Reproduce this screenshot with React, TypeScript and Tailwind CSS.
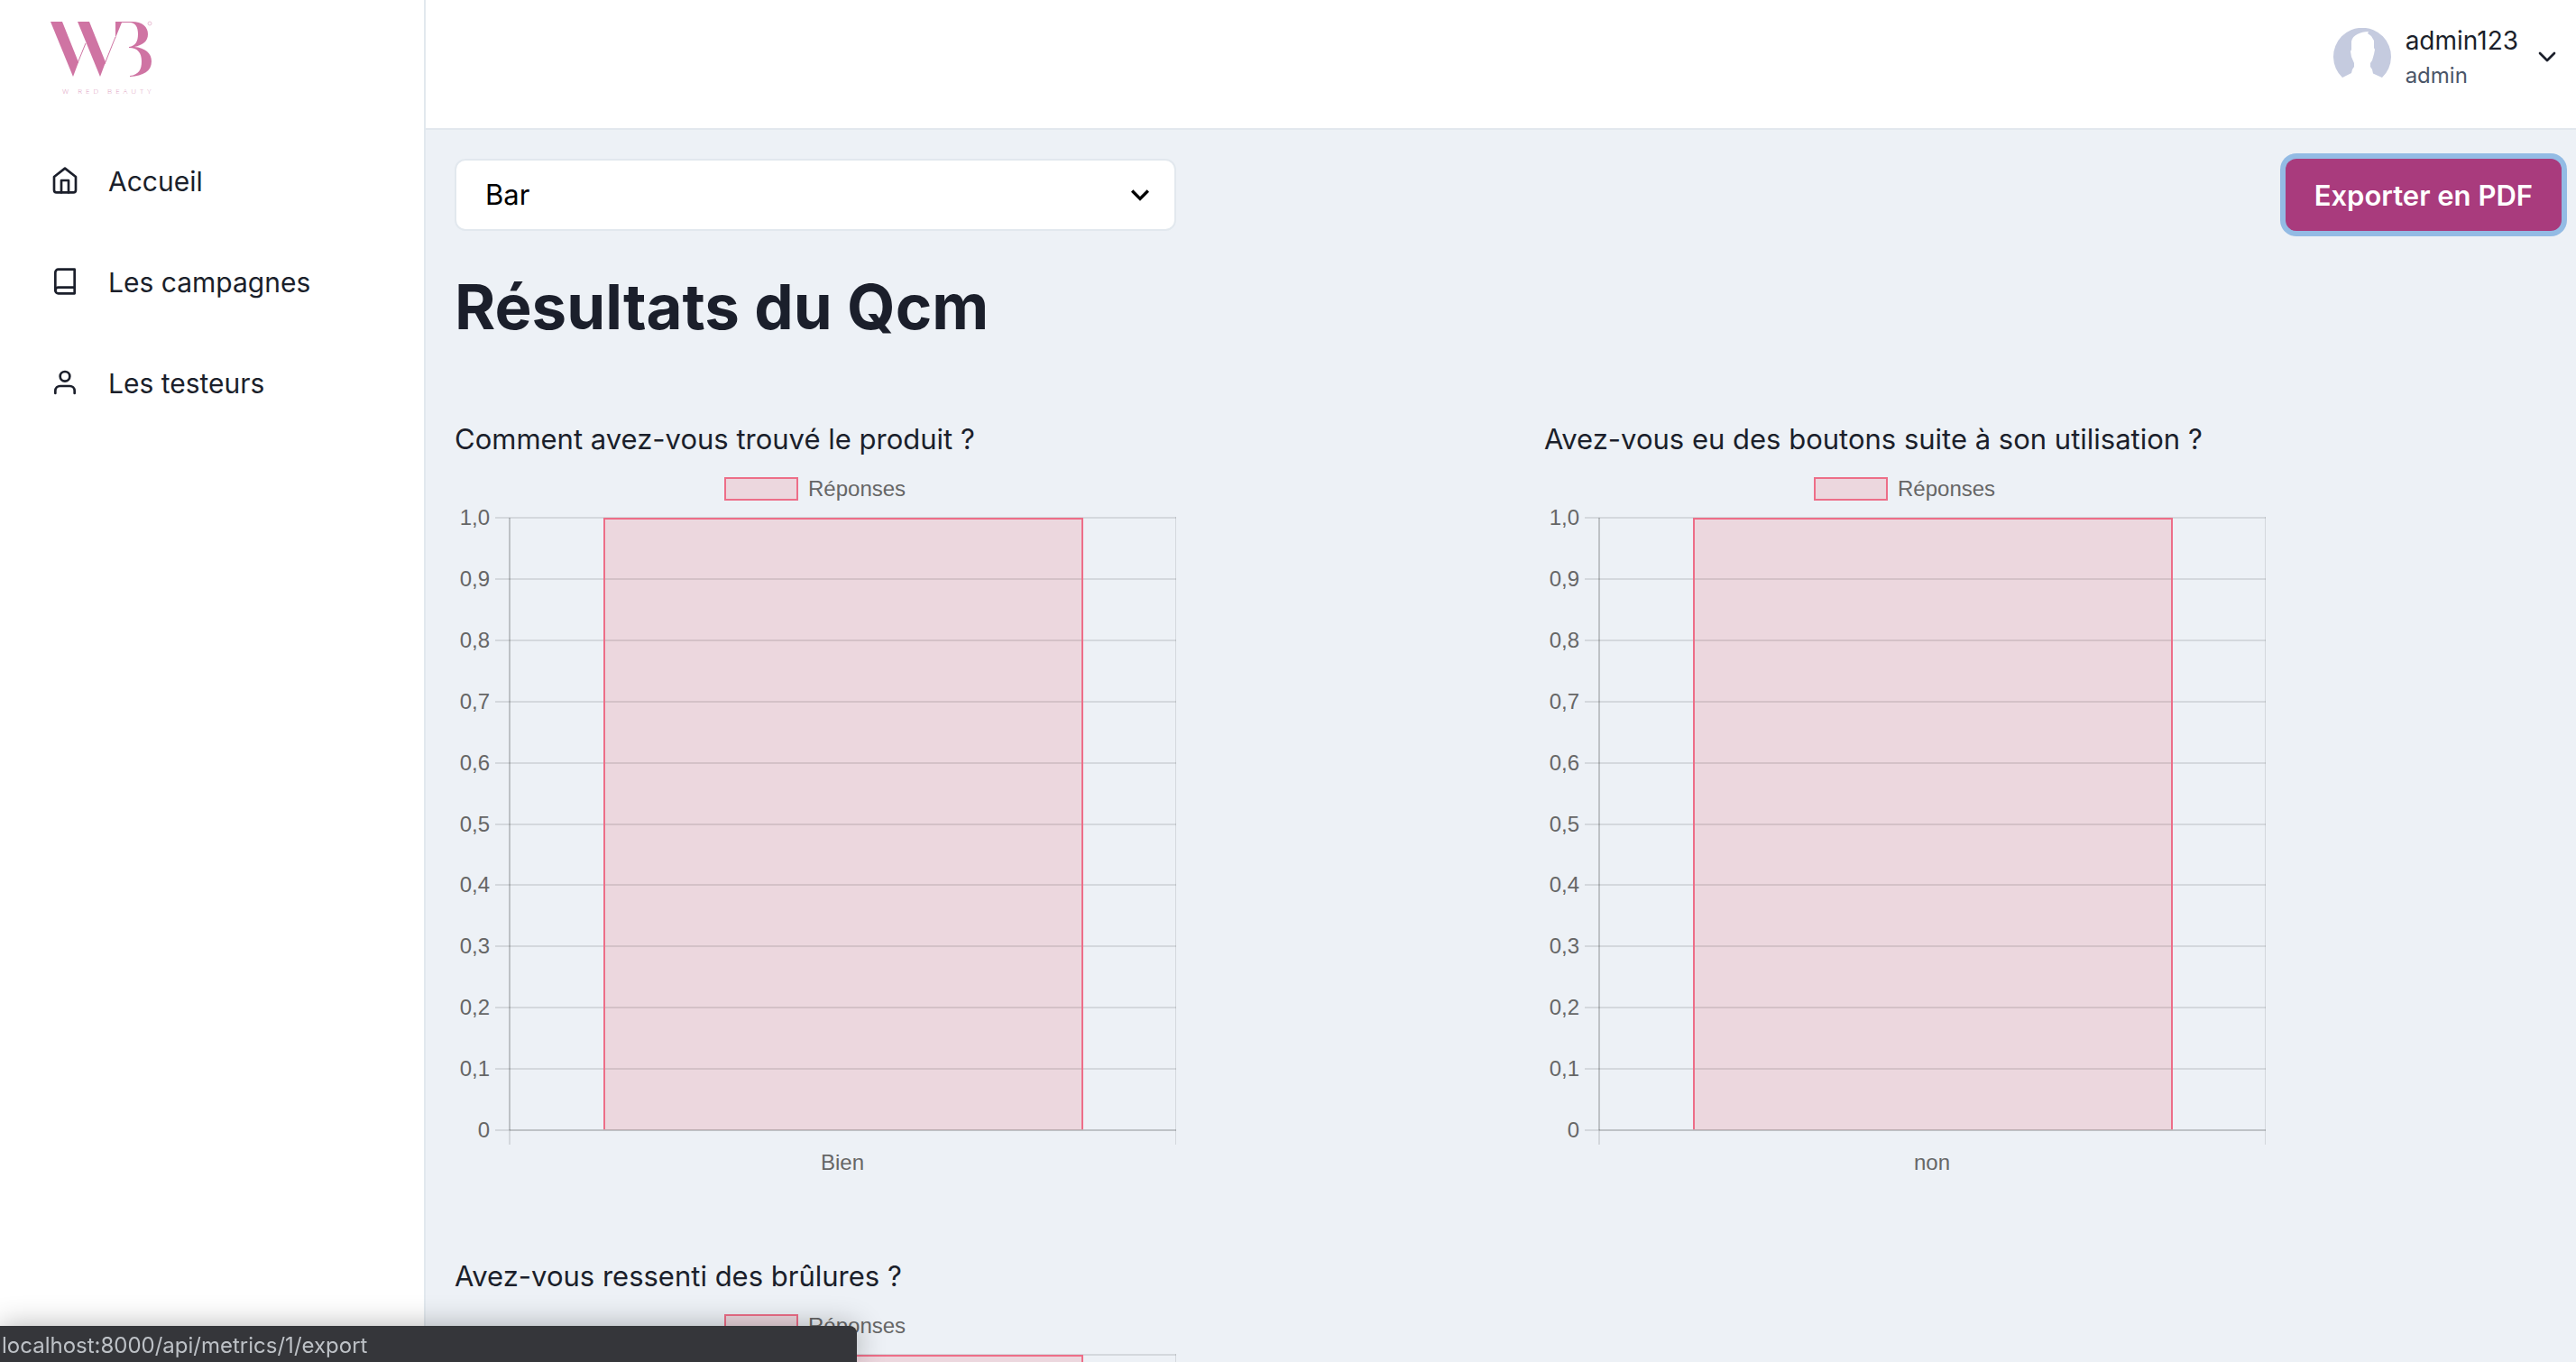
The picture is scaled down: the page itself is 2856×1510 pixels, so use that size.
import { FiBook, FiChevronDown, FiHome, FiUser } from "react-icons/fi";
import type { IconType } from "react-icons";

const NAV: { label: string; icon: IconType }[] = [
  { label: "Accueil", icon: FiHome },
  { label: "Les campagnes", icon: FiBook },
  { label: "Les testeurs", icon: FiUser },
];

const QUESTIONS = [
  { title: "Comment avez-vous trouvé le produit ?", answer: "Bien" },
  { title: "Avez-vous eu des boutons suite à son utilisation ?", answer: "non" },
  { title: "Avez-vous ressenti des brûlures ?", answer: "Oui" },
];

const TICKS = ["1,0", "0,9", "0,8", "0,7", "0,6", "0,5", "0,4", "0,3", "0,2", "0,1", "0"];

function Logo() {
  return (
    <svg viewBox="0 0 124 92" className="h-[92px] w-[124px]" role="img" aria-label="W Red Beauty">
      <g fill="#cf74a3">
        <path d="M4 8h13l18 45-6 16z" />
        <path d="M34 8h13l18 45-6 16z" />
        <path d="M76 8H94C106 8 112 14 112 22C112 30 106 34 97 36C109 37 116 43 116 52C116 63 107 68 92 69V68C102 67 105 61 105 52C105 43 101 37 91 37V36C98 35 101 30 101 22C101 14 98 9 92 9H83L76 26Z" />
      </g>
      <path d="M34 54l9-22M64 55l12-30" stroke="#cf74a3" strokeWidth="1" fill="none" />
      <circle cx="114" cy="10" r="2" stroke="#e9bfd5" fill="none" />
      <text x="17" y="88" fontSize="8" letterSpacing="4" fill="#dc9abd" fontWeight="300" fontFamily="'Open Sans', sans-serif">
        W RED BEAUTY
      </text>
    </svg>
  );
}

function Avatar() {
  return (
    <svg viewBox="0 0 64 64" className="size-16" aria-hidden="true">
      <path
        fill="#c5cbdf"
        d="M10 55A32 32 0 1 1 54 55L44 50.500 43 46 41 43V39L43 36 45 29 46 24 45 22V14L42 9 38 6 39 4C30 4 21 8 20 15V24L19 26 20 32 23 39V43L21 46 20 50Z"
      />
    </svg>
  );
}

function BarChart({ answer }: { answer: string }) {
  return (
    <svg viewBox="0 0 800 800" className="block w-full max-w-[800px]" role="img" aria-label={`Réponses : ${answer}`}>
      <rect x="300" y="19" width="80" height="24" fill="#ecd7de" stroke="#ed6e88" strokeWidth="2" />
      <g fill="#666" fontSize="24" fontFamily="'Liberation Sans', sans-serif">
        <text x="392" y="39">Réponses</text>
        {TICKS.map((t, i) => (
          <text key={t} x="39" y={Math.round(71 + i * 67.9)} textAnchor="end">
            {t}
          </text>
        ))}
        <text x="430" y="786" textAnchor="middle">{answer}</text>
      </g>
      <rect x="165" y="63" width="532" height="679" fill="#ecd7de" />
      <g stroke="#000" strokeOpacity=".1" strokeWidth="2">
        {TICKS.map((t, i) => (
          <line key={t} x1="45" x2="800" y1={Math.round(63 + i * 67.9)} y2={Math.round(63 + i * 67.9)} />
        ))}
        <line x1="61" x2="61" y1="63" y2="758" />
        <line x1="61" x2="61" y1="63" y2="742" />
        <line x1="61" x2="800" y1="742" y2="742" />
        <line x1="800" x2="800" y1="62" y2="758" />
      </g>
      <path d="M166 741V64H696V741" fill="none" stroke="#ed6e88" strokeWidth="2" />
    </svg>
  );
}

export default function App() {
  return (
    <div className="flex h-screen overflow-hidden bg-[#edf1f6] font-[Inter,sans-serif] text-[31px] leading-[48px] text-[#1b1f2b]">
      <aside className="w-[472px] shrink-0 border-r-2 border-[#e2e8ee] bg-white">
        <div className="flex h-36 items-start px-[52px] pt-4">
          <Logo />
        </div>
        <nav className="text-[30px] leading-[48px]">
          {NAV.map(({ label, icon: Icon }) => (
            <a key={label} href="#" className="flex h-28 items-center gap-8 px-14">
              <Icon className="size-8" />
              <span className="pt-0.5">{label}</span>
            </a>
          ))}
        </nav>
      </aside>
      <div className="min-w-0 flex-1 overflow-y-auto [scrollbar-width:none]">
        <header className="flex h-36 items-start justify-end border-b-2 border-[#e2e8ee] bg-white px-4 pt-6">
          <button type="button" className="flex items-center gap-4 text-left">
            <Avatar />
            <span className="flex flex-col">
              <span className="text-[28px] leading-[42px]">admin123</span>
              <span className="text-2xl leading-9 text-[#4a5568]">admin</span>
            </span>
            <FiChevronDown className="size-8" />
          </button>
        </header>
        <main className="pt-8 pr-4 pb-20 pl-8">
          <div className="flex items-center justify-between">
            <div className="relative w-[800px]">
              <select
                aria-label="Type de graphique"
                className="h-20 w-full appearance-none rounded-xl border-2 border-[#e2e8ee] bg-white px-8 text-black"
              >
                <option>Bar</option>
              </select>
              <svg viewBox="0 0 24 24" className="pointer-events-none absolute top-5 right-5 size-10" aria-hidden="true">
                <path d="M16.59 8.59L12 13.17 7.41 8.59 6 10l6 6 6-6z" />
              </svg>
            </div>
            <button
              type="button"
              className="h-20 rounded-xl bg-[#a93b7d] px-8 pt-0.5 font-semibold text-white ring-6 ring-[#93bbe4]"
            >
              Exporter en PDF
            </button>
          </div>
          <h1 className="mt-10 text-[69px] leading-[88px] font-bold">Résultats du Qcm</h1>
          <div className="mt-[79px] grid grid-cols-2 gap-20">
            {QUESTIONS.map((q) => (
              <section key={q.title}>
                <h2>{q.title}</h2>
                <BarChart answer={q.answer} />
              </section>
            ))}
          </div>
        </main>
      </div>
      <div className="fixed bottom-0 left-0 h-10 w-[950px] rounded-tr-lg bg-[#35363a] pt-0.5 pl-0.5 text-2xl leading-10 text-[#bdc1c6] shadow-[0_0_32px_rgba(0,0,0,0.3)]">
        localhost:8000/api/metrics/1/export
      </div>
    </div>
  );
}
